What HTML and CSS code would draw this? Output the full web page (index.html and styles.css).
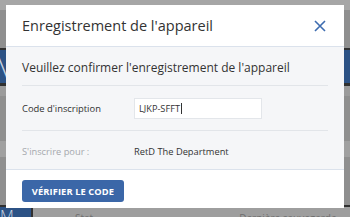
FILE: index.html
```html
<!DOCTYPE html>
<html lang="fr">
<head>
<meta charset="utf-8">
<link rel="stylesheet" href="styles.css">
</head>
<body>
<div class="app">
  <div class="app-top"></div>
  <div class="app-bar"></div>
  <div class="app-nav"><span class="logo">M</span></div>
  <div class="app-sub"></div>
  <div class="app-main">
    <div class="app-row"></div>
  </div>
  <div class="app-bottom">
    <span class="logo small">M</span>
    <div class="app-cols"><span class="col1">Stat</span><span class="col2">Dernière sauvegarde</span></div>
  </div>
</div>
<div class="modal">
  <div class="modal-header">
    <h1 class="modal-title">Enregistrement de l'appareil</h1>
    <svg class="close" width="12" height="12" viewBox="0 0 12 12"><path d="M1 1 L11 11 M11 1 L1 11" stroke="#3d6cb0" stroke-width="1.6" fill="none"/></svg>
  </div>
  <div class="modal-body">
    <h2 class="subtitle">Veuillez confirmer l'enregistrement de l'appareil</h2>
    <div class="row">
      <span class="label">Code d'inscription</span>
      <div class="input"><span>LJKP-SFFT</span><span class="caret"></span></div>
    </div>
    <div class="row last">
      <span class="label muted">S'inscrire pour :</span>
      <span class="value">RetD The Department</span>
    </div>
  </div>
  <div class="modal-footer">
    <button class="btn">VÉRIFIER LE CODE</button>
  </div>
</div>
</body>
</html>
```
FILE: styles.css
```css
html, body { margin: 0; padding: 0; }
body {
  width: 350px; height: 217px; overflow: hidden; position: relative;
  font-family: "Open Sans", "Liberation Sans", sans-serif;
  background: #8f8f8f;
}
.app { display: flex; flex-direction: column; height: 217px; overflow: hidden; }
.app-top { height: 10px; background: #a6a6a6; flex: none; }
.app-bar { height: 38px; background: #8f8f8f; border-bottom: 2px solid #303030; flex: none; }
.app-nav { height: 33px; background: #2c5285; border-bottom: 3px solid #303030; display: flex; align-items: center; overflow: hidden; flex: none; }
.logo { color: #c8d2e0; font-size: 30px; line-height: 1; font-weight: 300; margin-left: -6px; }
.app-sub { height: 10px; background: #9b9b9b; flex: none; }
.app-main { flex: 1; background: #8f8f8f; padding-top: 45px; border-bottom: 2px solid #303030; }
.app-row { height: 16px; background: #a0a0a0; }
.app-bottom { height: 10px; display: flex; background: #9e9e9e; overflow: hidden; flex: none; }
.logo.small { width: 31px; background: #2c5285; border-right: 2px solid #303030; font-size: 16px; overflow: hidden; margin-left: 0; line-height: 18px; }
.app-cols { flex: 1; font-size: 10px; color: #6f6f6f; line-height: 14px; padding-top: 4px; white-space: nowrap; }
.col1 { margin-left: 42px; }
.col2 { margin-left: 146px; }

.modal {
  position: absolute; left: 6px; top: 5px; width: 338px;
  background: #fff;
  color: #333;
}
.modal-header {
  height: 41px; display: flex; align-items: center; justify-content: space-between;
  padding: 0 18px 0 16px; border-bottom: 1px solid #dbe2ec;
}
.modal-title { margin: 0; font-size: 14.5px; font-weight: 400; color: #333; }
.close { display: block; }
.modal-body { background: #f5f6f8; padding: 0 16px; border-bottom: 1px solid #dbe2ec; }
.subtitle { margin: 0; font-size: 12px; font-weight: 400; color: #333; height: 38px; line-height: 42px; border-bottom: 1px solid #e2e5e9; }
.row { display: flex; align-items: center; height: 44px; border-bottom: 1px solid #e2e5e9; font-size: 9.3px; }
.row.last { border-bottom: none; height: 36px; padding-top: 2px; }
.label { width: 112px; font-size: 9.4px; }
.label.muted { color: #a5a8ad; font-size: 9.3px; }
.input {
  width: 122px; height: 19px; background: #fff; border: 1px solid #e3e6ea;
  display: flex; align-items: center; padding-left: 4px; font-size: 9.2px;
}
.caret { display: inline-block; width: 1px; height: 11px; background: #333; margin-left: 1px; }
.value { color: #333; font-size: 9.3px; }
.modal-footer { height: 38px; box-sizing: border-box; padding: 10px 16px 0; }
.btn {
  display: block; width: 102px; height: 22px; border: none; border-radius: 3px;
  background: #3b67a8; color: #fff; font-family: "Open Sans", sans-serif;
  font-weight: 700; font-size: 9.3px; padding: 0; letter-spacing: 0.1px;
}
```
